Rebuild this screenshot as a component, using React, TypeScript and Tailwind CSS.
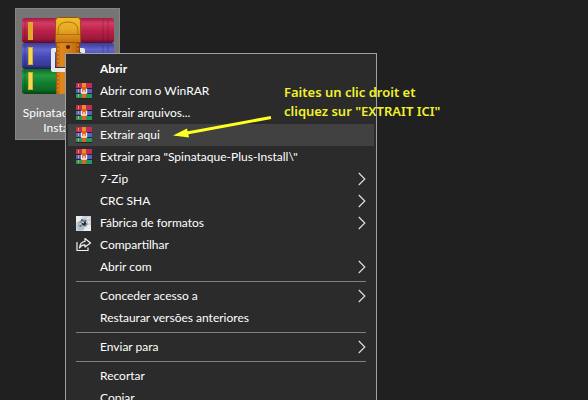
import type { ReactNode } from "react";

type Item = { label: string; icon?: ReactNode; submenu?: boolean; bold?: boolean; active?: boolean };

function BooksIcon() {
  return (
    <svg width="92" height="80" viewBox="0 0 92 80" aria-hidden="true">
      <defs>
        <linearGradient id="red" x2="0" y2="1">
          <stop offset="0" stopColor="#a01840" /><stop offset=".2" stopColor="#d23c64" /><stop offset=".5" stopColor="#bb2249" /><stop offset=".85" stopColor="#9a183c" /><stop offset="1" stopColor="#5e0a22" />
        </linearGradient>
        <linearGradient id="blue" x2="0" y2="1">
          <stop offset="0" stopColor="#3a3c98" /><stop offset=".25" stopColor="#6064cc" /><stop offset=".55" stopColor="#4448b4" /><stop offset=".85" stopColor="#363a98" /><stop offset="1" stopColor="#1d1e5c" />
        </linearGradient>
        <linearGradient id="green" x2="0" y2="1">
          <stop offset="0" stopColor="#0a6a24" /><stop offset=".25" stopColor="#279a40" /><stop offset=".55" stopColor="#108030" /><stop offset=".85" stopColor="#0b6825" /><stop offset="1" stopColor="#054013" />
        </linearGradient>
        <linearGradient id="strap" x2="1" y2="0">
          <stop offset="0" stopColor="#a85208" /><stop offset=".2" stopColor="#e08a1c" /><stop offset=".8" stopColor="#c97010" /><stop offset="1" stopColor="#8a3f04" />
        </linearGradient>
        <linearGradient id="flap" x2="0" y2="1">
          <stop offset="0" stopColor="#efc02c" /><stop offset=".5" stopColor="#e6a524" /><stop offset="1" stopColor="#c87210" />
        </linearGradient>
      </defs>
      <rect x="0" y="1" width="92" height="25" rx="3" fill="url(#red)" />
      <rect x="0" y="26" width="92" height="26" rx="3" fill="url(#blue)" />
      <rect x="0" y="52" width="92" height="25" rx="3" fill="url(#green)" />
      <path d="M3 3v21M3 28v22M3 54v21M81 3v21M86 3v21M81 28v22M86 28v22" stroke="#000" strokeOpacity=".2" />
      <path d="M8.5 5v18M8.5 30v18M8.5 55v18" stroke="#e2a828" strokeWidth="5" />
      <path d="M8.5 31v16M8.5 56v16" stroke="#f0dc50" strokeWidth="3" />
      <path d="M36 33h-5v20h30V33h-5" fill="none" stroke="#e8e8e8" strokeWidth="4" strokeLinejoin="round" />
      <rect x="34" y="24" width="24" height="26" fill="url(#strap)" />
      <rect x="34" y="55" width="24" height="22" fill="url(#strap)" />
      <path d="M33.5 4q0-3.500 3-3.500h19q3 0 3 3.500v21.500h-25z" fill="url(#flap)" stroke="#9a5208" />
      <path d="M36 17v-3q0-9 10-9t10 9v3M34 17.500h24" fill="none" stroke="#b07012" />
      <path d="M36 27v22M56 27v22M36 56v20M56 56v20" stroke="#ffd070" strokeOpacity=".5" strokeDasharray="2 2" />
      <circle cx="46" cy="30" r="2" fill="#4b2203" />
    </svg>
  );
}

function RarIcon() {
  return (
    <svg width="16" height="16" viewBox="0 0 16 16" aria-hidden="true">
      <path d="M0 0h16v16H0z" fill="#28222e" />
      <path d="M0 0h16v5H0z" fill="#c22c50" />
      <path d="M0 6h16v4H0z" fill="#5560c8" />
      <path d="M0 11h16v4H0z" fill="#229a58" />
      <path d="M2.5 1v3M2.5 6v3M2.5 11v3" stroke="#d8a060" />
      <path d="M6 0h4v15H6z" fill="#dc641c" />
      <path d="M6 0h4v4H6z" fill="#ee8c2c" />
      <path d="M5.5 5.500v4.500h5V5.500M8 7v3" fill="none" stroke="#f5eaea" strokeWidth="1.3" />
    </svg>
  );
}

function FactoryIcon() {
  return (
    <svg width="15" height="15" viewBox="0 0 15 15" aria-hidden="true">
      <path d="M0 0h15v15H0z" fill="#cbd3da" />
      <path d="M0 0h7L4 5 0 6zM9 9h6v6H7z" fill="#e8edf0" />
      <path d="M1 10l4-1 4 3-2 2H2z" fill="#b4bfca" />
      <path d="M3 6q3-4 8-2l-1 2 2 2-2 3-4-1-3 1-1-3z" fill="#8796a3" />
      <circle cx="8" cy="7.5" r="2" fill="#1c2830" />
      <path d="M6 6l2 1M11 3l2-1M12 6h2M3 8h2" stroke="#fff" />
      <path d="M5 4h2M9 5h1M4 10h1" stroke="#293946" />
    </svg>
  );
}

function ShareIcon() {
  return (
    <svg width="16" height="16" viewBox="0 0 16 16" fill="none" stroke="#f2f2f2" strokeWidth="1.2" aria-hidden="true">
      <path d="M1 5v8.500h11v-3" />
      <path d="M9 1.500L14.500 6 9 10V7.800Q5.500 7.500 3.500 11 4 5 9 4.300z" strokeLinejoin="round" />
    </svg>
  );
}

function Chevron() {
  return (
    <svg width="8" height="14" viewBox="0 0 8 14" fill="none" stroke="#dedede" strokeWidth="1.2" aria-hidden="true">
      <path d="M.8 1l6 6-6 6" />
    </svg>
  );
}

const groups: Item[][] = [
  [
    { label: "Abrir", bold: true },
    { label: "Abrir com o WinRAR", icon: <RarIcon /> },
    { label: "Extrair arquivos...", icon: <RarIcon /> },
    { label: "Extrair aqui", icon: <RarIcon />, active: true },
    { label: 'Extrair para "Spinataque-Plus-Install\\"', icon: <RarIcon /> },
    { label: "7-Zip", submenu: true },
    { label: "CRC SHA", submenu: true },
    { label: "Fábrica de formatos", icon: <FactoryIcon />, submenu: true },
    { label: "Compartilhar", icon: <ShareIcon /> },
    { label: "Abrir com", submenu: true },
  ],
  [{ label: "Conceder acesso a", submenu: true }, { label: "Restaurar versões anteriores" }],
  [{ label: "Enviar para", submenu: true }],
  [{ label: "Recortar" }, { label: "Copiar" }],
];

function MenuRow({ item }: { item: Item }) {
  return (
    <button
      type="button"
      role="menuitem"
      className={`flex h-[22px] w-full items-center px-2 text-left whitespace-nowrap ${item.active ? "bg-[#414141]" : ""} ${item.bold ? "font-bold" : ""}`}
    >
      <span className="flex w-6 shrink-0">{item.icon}</span>
      <span className="grow">{item.label}</span>
      {item.submenu && <Chevron />}
    </button>
  );
}

export default function App() {
  return (
    <main className="relative h-screen overflow-hidden bg-[#202020] font-[Lato,sans-serif] text-xs text-white">
      <div className="pt-2 pl-[15px]">
        <figure className="flex w-[105px] flex-col items-center border border-[#858585] bg-[#757575] pt-2 pb-1">
          <BooksIcon />
          <figcaption className="pt-2 text-center leading-[15px]">
            Spinataque-Plus-
            <br />
            Install.rar
          </figcaption>
        </figure>
      </div>

      <div role="menu" className="absolute top-[53px] left-[65px] w-[312px] border border-[#a0a0a0] bg-[#2b2b2b] px-0.5 py-1">
        {groups.map((group, i) => (
          <div key={i}>
            {i > 0 && <hr className="mx-2 my-[3px] border-[#808080]" />}
            {group.map((item) => (
              <MenuRow key={item.label} item={item} />
            ))}
          </div>
        ))}
      </div>

      <svg className="absolute top-[110px] left-[170px]" width="104" height="32" viewBox="0 0 104 32" fill="#ffff20" aria-hidden="true">
        <path d="M101 7.500L17 23" stroke="#ffff20" strokeWidth="3" />
        <path d="M3 25.500l14-7 2 9z" />
      </svg>
      <p className="absolute top-[83px] left-[284px] font-['Noto_Sans','Open_Sans',sans-serif] text-[13px] leading-[19px] font-semibold whitespace-nowrap text-[#f2f22c]">
        Faites un clic droit et
        <br />
        cliquez sur "EXTRAIT ICI"
      </p>
    </main>
  );
}
